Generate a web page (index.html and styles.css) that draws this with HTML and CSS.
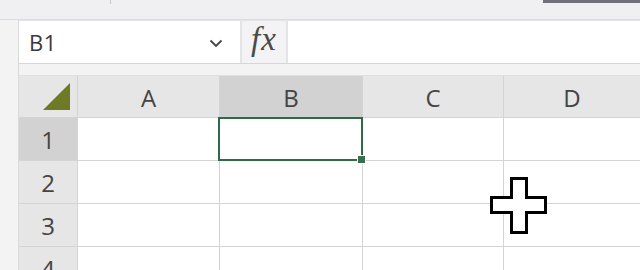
FILE: index.html
```html
<!DOCTYPE html>
<html>
<head>
<meta charset="utf-8">
<link rel="stylesheet" href="styles.css">
</head>
<body>
<div class="topbar">
  <div class="tick"></div>
  <div class="spacer"></div>
  <div class="darkstrip"></div>
</div>
<div class="main">
  <div class="gutter"></div>
  <div class="content">
    <div class="formula-row">
      <div class="namebox">
        <span class="ref">B1</span>
        <svg class="chev" width="14" height="9" viewBox="0 0 14 9"><path d="M1.5 1.5 L7 7 L12.5 1.5" fill="none" stroke="#444" stroke-width="1.8"/></svg>
      </div>
      <div class="fx"><span>fx</span></div>
      <div class="formula"></div>
    </div>
    <div class="strip"></div>
    <div class="sheet">
      <div class="corner"><svg width="30" height="30" viewBox="0 0 30 30"><path d="M28 1 L28 28 L1 28 Z" fill="#6e7a25"/></svg></div>
      <div class="colhead">A</div>
      <div class="colhead sel">B</div>
      <div class="colhead">C</div>
      <div class="colhead">D</div>

      <div class="rowhead sel">1</div>
      <div class="cell"></div>
      <div class="cell active"></div>
      <div class="cell"></div>
      <div class="cell"></div>

      <div class="rowhead">2</div>
      <div class="cell"></div>
      <div class="cell"></div>
      <div class="cell"></div>
      <div class="cell"></div>

      <div class="rowhead">3</div>
      <div class="cell"></div>
      <div class="cell"></div>
      <div class="cell"></div>
      <div class="cell"></div>

      <div class="rowhead">4</div>
      <div class="cell"></div>
      <div class="cell"></div>
      <div class="cell"></div>
      <div class="cell"></div>
    </div>
  </div>
</div>
<svg class="cursor" width="60" height="60" viewBox="0 0 60 60">
  <path d="M21.5 1.5 H36.5 V20.5 H55.5 V35.5 H36.5 V55.5 H21.5 V35.5 H1.5 V20.5 H21.5 Z" fill="#fff" stroke="#000" stroke-width="3"/>
</svg>
</body>
</html>
```
FILE: styles.css
```css
html, body {
  margin: 0;
  padding: 0;
}
body {
  width: 640px;
  height: 270px;
  overflow: hidden;
  background: #f0eff2;
  font-family: "Open Sans", "Noto Sans", sans-serif;
  position: relative;
}
.topbar {
  height: 20px;
  display: flex;
  align-items: flex-start;
  border-bottom: 1px solid #dcdbde;
  box-sizing: border-box;
}
.tick {
  width: 1px;
  height: 4px;
  margin-left: 110px;
  background: #c8c8cc;
}
.spacer {
  flex: 1;
}
.darkstrip {
  width: 97px;
  height: 3px;
  background: #717078;
}
.main {
  display: flex;
  height: 250px;
}
.gutter {
  width: 19px;
  flex: none;
  background: #f3f3f4;
  border-right: 1px solid #dadada;
  box-sizing: border-box;
}
.content {
  flex: 1;
  display: flex;
  flex-direction: column;
  min-width: 0;
}
.formula-row {
  height: 44px;
  box-sizing: border-box;
  display: flex;
  gap: 2px;
  background: #e4e3e6;
  border-bottom: 1px solid #d6d6d8;
  padding-top: 1px;
  flex: none;
}
.namebox {
  width: 221px;
  background: #fff;
  display: flex;
  align-items: center;
  justify-content: space-between;
  padding: 0 17px 0 10px;
  box-sizing: border-box;
}
.ref {
  font-size: 22px;
  color: #3a3a3a;
  letter-spacing: 0.5px;
}
.chev {
  margin-top: 2px;
}
.fx {
  width: 44px;
  background: #f3f2f4;
  display: flex;
  align-items: center;
  justify-content: center;
}
.fx span {
  font-family: "Liberation Serif", serif;
  font-style: italic;
  font-size: 33px;
  color: #4a4a4a;
  margin-top: -5px;
  letter-spacing: 1px;
}
.formula {
  flex: 1;
  background: #fff;
}
.strip {
  height: 12px;
  box-sizing: border-box;
  background: #f3f3f4;
  border-bottom: 1px solid #e0e0e0;
  flex: none;
}
.sheet {
  flex: 1;
  display: grid;
  grid-template-columns: 58px 141px 142px 140px 1fr;
  grid-template-rows: 41px 42px 42px 42px 42px;
  gap: 1px;
  background: #d4d4d4;
  overflow: hidden;
}
.corner {
  background: #e6e6e6;
  display: flex;
  align-items: flex-end;
  justify-content: flex-end;
  padding: 0 5px 5px 0;
}
.colhead, .rowhead {
  background: #e6e6e6;
  color: #444;
  font-size: 24px;
  display: flex;
  align-items: center;
  justify-content: center;
}
.colhead {
  padding-top: 2px;
}
.colhead.sel, .rowhead.sel {
  background: #d2d2d2;
}
.cell {
  background: #fff;
}
.cell.active {
  position: relative;
}
.cell.active::after {
  content: "";
  position: absolute;
  left: -2px;
  top: -1px;
  right: -1px;
  bottom: -1px;
  border: 2px solid #2e6a45;
}
.cell.active::before {
  content: "";
  position: absolute;
  right: -4px;
  bottom: -4px;
  width: 7px;
  height: 7px;
  background: #3a6e4f;
  border: 1px solid #fff;
  z-index: 2;
}
.cursor {
  position: absolute;
  left: 490px;
  top: 177px;
}
```
